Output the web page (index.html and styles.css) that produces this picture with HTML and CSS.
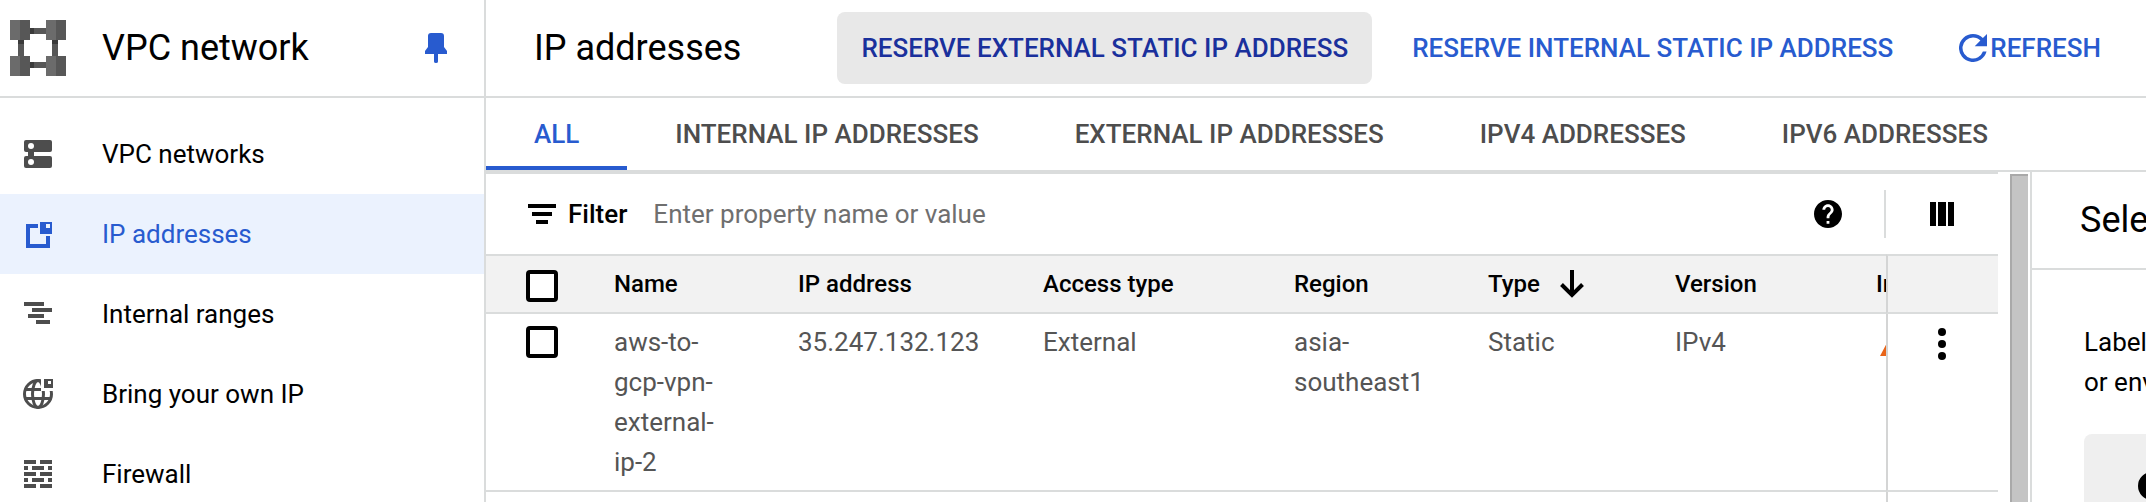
FILE: index.html
```html
<!DOCTYPE html>
<html lang="en">
<head>
<meta charset="utf-8">
<title>IP addresses – VPC network</title>
<link rel="stylesheet" href="styles.css">
</head>
<body>
<div class="app">
  <aside class="sidebar">
    <header class="product">
      <svg class="product-logo" viewBox="0 0 56 56" aria-hidden="true">
        <path fill="#575757" d="M20 8h16v6H20zM20 42h16v6H20zM8 20h6v16H8zM42 20h6v16h-6z"/>
        <path fill="#3a3a3a" d="M20 8h4v6h-4zM20 42h4v6h-4zM8 20h6v4H8zM42 20h6v4h-6z"/>
        <path fill="#6b6b6b" d="M0 0h10v20H0zM36 0h10v20H36zM0 36h10v20H0zM36 36h10v20H36z"/>
        <path fill="#575757" d="M10 0h10v20H10zM46 0h10v20H46zM10 36h10v20H10zM46 36h10v20H46z"/>
      </svg>
      <h2 class="title">VPC network</h2>
      <button class="icon-button" type="button" aria-label="Unpin product">
        <svg class="pin" viewBox="0 0 22 30" fill="#285bcf" aria-hidden="true"><path d="M6 0h10q3 0 3 3v11l3 4v3H13v7.500q0 1.500-2 1.500t-2-1.500V21H0v-3l3-4V3q0-3 3-3z"/></svg>
      </button>
    </header>
    <nav class="nav" aria-label="VPC network">
      <a class="nav-item" href="#networks">
        <svg class="nav-icon" viewBox="0 0 28 28" aria-hidden="true"><path fill="currentColor" d="M4 10h6v8H4z"/><rect width="28" height="12" rx="2" fill="currentColor"/><rect y="16" width="28" height="12" rx="2" fill="currentColor"/><circle cx="7" cy="6" r="3" fill="#fff"/><circle cx="7" cy="22" r="3" fill="#fff"/></svg>
        VPC networks</a>
      <a class="nav-item selected" href="#addresses" aria-current="page">
        <svg class="nav-icon" viewBox="0 0 28 28" fill="currentColor" aria-hidden="true"><path d="M2 4h12v4H6v16h16V16h4v12H2z"/><path fill-rule="evenodd" d="M16 2h12v12H16zM22 4v4h4V4z"/></svg>
        IP addresses</a>
      <a class="nav-item" href="#ranges">
        <svg class="nav-icon" viewBox="0 0 28 28" fill="currentColor" aria-hidden="true"><path d="M0 2h20v4H0zM8 8h20v4H8zM4 14h16v4H4zM12 20h14v4H12z"/></svg>
        Internal ranges</a>
      <a class="nav-item" href="#byoip">
        <svg class="nav-icon" viewBox="0 0 28 28" aria-hidden="true"><g fill="none" stroke="currentColor" stroke-width="3"><circle cx="14" cy="14" r="13.500"/><ellipse cx="14" cy="14" rx="5.500" ry="13.500"/><path d="M1 9.500h26M1 18.500h26"/></g><path fill="#fff" d="M17-2h13v13H17z"/><path fill="currentColor" fill-rule="evenodd" d="M20-1h9v9h-9zM24 1v3h3V1z"/></svg>
        Bring your own IP</a>
      <a class="nav-item" href="#firewall">
        <svg class="nav-icon" viewBox="0 0 28 28" fill="currentColor" aria-hidden="true"><path d="M0 0h12v4H0zM16 0h12v4H16zM0 6h4v4H0zM8 6h12v4H8zM24 6h4v4h-4zM0 12h12v4H0zM16 12h12v4H16zM0 18h4v4H0zM8 18h12v4H8zM24 18h4v4h-4zM0 24h12v4H0zM16 24h12v4H16z"/></svg>
        Firewall</a>
    </nav>
  </aside>

  <main class="main">
    <header class="toolbar">
      <h1 class="title">IP addresses</h1>
      <div class="actions">
        <button class="action hovered" type="button">RESERVE EXTERNAL STATIC IP ADDRESS</button>
        <button class="action" type="button">RESERVE INTERNAL STATIC IP ADDRESS</button>
        <button class="action" type="button"><svg class="refresh" viewBox="4 4 16 16" fill="currentColor" aria-hidden="true"><path d="M17.650 6.350A7.960 7.960 0 0 0 12 4a8 8 0 1 0 7.730 10h-2.080A6 6 0 1 1 12 6c1.660 0 3.140.69 4.220 1.780L13 11h7V4z"/></svg>REFRESH</button>
      </div>
    </header>
    <nav class="tabs" aria-label="Address type">
      <a class="tab active" href="#all" aria-current="true">ALL</a>
      <a class="tab" href="#internal">INTERNAL IP ADDRESSES</a>
      <a class="tab" href="#external">EXTERNAL IP ADDRESSES</a>
      <a class="tab" href="#ipv4">IPV4 ADDRESSES</a>
      <a class="tab" href="#ipv6">IPV6 ADDRESSES</a>
    </nav>
    <div class="content">
      <section class="list">
        <div class="filter">
          <svg class="filter-icon" viewBox="0 0 28 20" aria-hidden="true"><path d="M0 0h28v4H0zM4 8h20v4H4zM8 16h12v4H8z"/></svg>
          <label class="filter-label" for="filter">Filter</label>
          <input class="filter-input" id="filter" type="text" placeholder="Enter property name or value">
          <button class="icon-button" type="button" aria-label="Filter help">
            <svg class="help" viewBox="2 2 20 20" aria-hidden="true"><path d="M12 2C6.480 2 2 6.480 2 12s4.480 10 10 10 10-4.480 10-10S17.520 2 12 2zm1 17h-2v-2h2v2zm2.070-7.750l-.9.920C13.450 12.900 13 13.500 13 15h-2v-.5c0-1.100.45-2.100 1.170-2.830l1.240-1.260c.37-.36.59-.86.59-1.410 0-1.100-.9-2-2-2s-2 .9-2 2H8c0-2.210 1.790-4 4-4s4 1.790 4 4c0 .88-.36 1.680-.93 2.250z"/></svg>
          </button>
          <div class="columns">
            <button class="icon-button" type="button" aria-label="Column display options">
              <svg class="columns-icon" viewBox="0 0 24 24" aria-hidden="true"><path d="M0 0h6v24H0zM8 0h8v24H8zM18 0h6v24h-6z"/></svg>
            </button>
          </div>
        </div>
        <table class="table">
          <colgroup>
            <col class="col-check"><col class="col-name"><col class="col-ip"><col class="col-access"><col class="col-region"><col class="col-type"><col class="col-version"><col class="col-use"><col class="col-menu">
          </colgroup>
          <thead>
            <tr>
              <th class="check"><input class="box" type="checkbox" aria-label="Select all rows"></th>
              <th>Name</th>
              <th>IP address</th>
              <th>Access type</th>
              <th>Region</th>
              <th><span class="sorted">Type <svg class="sort" viewBox="0 0 24 28" aria-hidden="true"><path fill="none" stroke="#000" stroke-width="4" d="M12 0v25M1.500 14.500 12 25l10.500-10.500"/></svg></span></th>
              <th>Version</th>
              <th class="use">In use by</th>
              <th class="menu"></th>
            </tr>
          </thead>
          <tbody>
            <tr>
              <td class="check"><input class="box" type="checkbox" aria-label="Select aws-to-gcp-vpn-external-ip-2"></td>
              <td class="name">aws-to-gcp-vpn-external-ip-2</td>
              <td>35.247.132.123</td>
              <td>External</td>
              <td>asia-southeast1</td>
              <td>Static</td>
              <td>IPv4</td>
              <td class="use"><svg class="warning" viewBox="0 0 28 26" fill="#e8651a" aria-hidden="true"><path d="M14 0 28 26H0z"/></svg></td>
              <td class="menu"><button class="icon-button" type="button" aria-label="More actions"><svg class="kebab" viewBox="0 0 8 32" aria-hidden="true"><circle cx="4" cy="4" r="4"/><circle cx="4" cy="16" r="4"/><circle cx="4" cy="28" r="4"/></svg></button></td>
            </tr>
            <tr>
              <td colspan="8"></td>
              <td class="menu"></td>
            </tr>
          </tbody>
        </table>
      </section>
      <div class="scrollbar"></div>
      <aside class="info">
        <h2 class="info-title title">Select</h2>
        <div class="info-body">
          <p class="info-text">Labels<br>or environment</p>
          <div class="notice"><svg class="notice-icon" viewBox="0 0 28 28" aria-hidden="true"><path fill-rule="evenodd" d="M14 0a14 14 0 1 0 0 28 14 14 0 0 0 0-28zM12 7h4v3h-4zM12 13h4v8h-4z"/></svg></div>
        </div>
      </aside>
    </div>
  </main>
</div>
</body>
</html>
```
FILE: styles.css
```css
* {
  box-sizing: border-box;
}

body {
  margin: 0;
  font: 400 26px/40px Roboto, "Liberation Sans", sans-serif;
  color: #000;
  background: #fff;
}

svg {
  display: block;
  flex: none;
}

a {
  color: inherit;
  text-decoration: none;
}

button {
  padding: 0;
  border: 0;
  background: none;
  font: inherit;
  color: inherit;
}

.app {
  display: grid;
  grid-template-columns: 486px minmax(0, 1fr);
  height: 100vh;
  overflow: hidden;
}

.title {
  margin: 0;
  font-size: 36px;
  font-weight: 400;
  white-space: nowrap;
}

/* Sidebar */
.sidebar {
  border-right: 2px solid #dadcdc;
}

.product {
  display: flex;
  align-items: center;
  height: 98px;
  padding: 0 37px 0 10px;
  border-bottom: 2px solid #dadcdc;
}

.product-logo {
  width: 56px;
  height: 56px;
  margin-right: 36px;
}

.product .icon-button {
  margin-left: auto;
}

.pin {
  width: 22px;
  height: 30px;
}

.nav {
  padding-top: 16px;
}

.nav-item {
  display: flex;
  align-items: center;
  gap: 50px;
  height: 80px;
  padding-left: 24px;
}

.nav-icon {
  width: 28px;
  height: 28px;
  overflow: visible;
  color: #4d4d4d;
}

.selected {
  background: #ebf2fe;
  color: #285bcf;
}

.selected .nav-icon {
  color: #285bcf;
}

/* Page header */
.main {
  display: flex;
  flex-direction: column;
  min-width: 0;
}

.toolbar {
  display: flex;
  flex: none;
  align-items: center;
  gap: 96px;
  height: 98px;
  padding-left: 48px;
  border-bottom: 2px solid #dadcdc;
}

.actions {
  display: flex;
  gap: 16px;
}

.action {
  display: flex;
  align-items: center;
  gap: 3px;
  height: 72px;
  padding: 0 24px;
  border-radius: 8px;
  font-weight: 500;
  color: #285bcf;
  white-space: nowrap;
}

.action:last-child {
  padding-left: 26px;
}

.hovered {
  background: #e8e8e8;
  color: #1a309c;
}

.refresh {
  width: 28px;
  height: 28px;
}

.tabs {
  display: flex;
  flex: none;
  height: 74px;
  border-bottom: 2px solid #dadcdc;
}

.tab {
  padding: 16px 48px 0;
  border-bottom: 4px solid transparent;
  font-weight: 500;
  color: #4d4d4d;
  white-space: nowrap;
}

.active {
  border-color: #285bcf;
  color: #285bcf;
}

/* Address list */
.content {
  display: flex;
  flex: 1;
  min-height: 0;
}

.list {
  flex: 1;
  min-width: 0;
  overflow: hidden;
}

.filter {
  display: flex;
  align-items: center;
  height: 82px;
  padding-left: 42px;
  border-top: 2px solid #dadcdc;
}

.filter-icon {
  width: 28px;
  height: 20px;
  margin-right: 12px;
}

.filter-label {
  font-weight: 500;
}

.filter-input {
  flex: 1;
  min-width: 0;
  margin: 0 26px;
  padding: 0;
  border: 0;
  outline: 0;
  font: inherit;
}

.filter-input::placeholder {
  color: #6f6f6f;
  opacity: 1;
}

.help {
  width: 28px;
  height: 28px;
}

.columns {
  display: flex;
  align-items: center;
  justify-content: center;
  width: 114px;
  height: 48px;
  margin-left: 42px;
  border-left: 2px solid #dadcdc;
}

.columns-icon {
  width: 24px;
  height: 24px;
}

.table {
  width: 100%;
  table-layout: fixed;
  border-spacing: 0;
}

.col-check,
.col-menu {
  width: 112px;
}

.col-name {
  width: 184px;
}

.col-ip {
  width: 245px;
}

.col-access {
  width: 251px;
}

.col-region {
  width: 194px;
}

.col-type {
  width: 187px;
}

.col-version {
  width: 201px;
}

.col-use {
  width: 26px;
}

.table th {
  height: 60px;
  padding: 0 16px;
  border-top: 2px solid #dadcdc;
  border-bottom: 2px solid #dadcdc;
  background: #f2f2f2;
  font-size: 24px;
  font-weight: 500;
  text-align: left;
  white-space: nowrap;
}

.table td {
  padding: 8px 16px;
  border-bottom: 2px solid #dadcdc;
  color: #555;
  vertical-align: top;
}

.table .name {
  padding-right: 56px;
}

.table .check {
  padding-left: 40px;
}

.table th.check {
  padding-top: 4px;
}

.box {
  display: block;
  width: 32px;
  height: 32px;
  margin: 4px 0;
  border: 4px solid #000;
  border-radius: 4px;
  background: #fff;
  appearance: none;
}

.sorted {
  display: flex;
  align-items: center;
  gap: 20px;
}

.sort {
  width: 24px;
  height: 28px;
}

.table .use {
  padding-right: 0;
  overflow: hidden;
}

.warning {
  width: 28px;
  height: 26px;
  margin: 8px 4px;
}

.table .menu {
  padding-left: 14px;
  border-left: 2px solid #d4d5d5;
}

.menu .icon-button {
  display: block;
  margin: 6px auto;
}

.kebab {
  width: 8px;
  height: 32px;
}

.scrollbar {
  flex: none;
  width: 18px;
  margin: 2px 2px 0 12px;
  border-top: 2px solid #a9a9a9;
  border-left: 2px solid #a9a9a9;
  background: #c4c4c4;
}

/* Info panel */
.info {
  flex: none;
  width: 116px;
  border-left: 2px solid #dadcdc;
  overflow: hidden;
  white-space: nowrap;
}

.info-title {
  height: 98px;
  padding-left: 48px;
  border-bottom: 2px solid #dadcdc;
  line-height: 96px;
}

.info-body {
  padding: 52px 0 0 52px;
}

.info-text {
  margin: 0;
}

.notice {
  width: 400px;
  margin-top: 32px;
  padding: 38px 54px;
  border-radius: 8px;
  background: #efefef;
}

.notice-icon {
  width: 28px;
  height: 28px;
}
```
